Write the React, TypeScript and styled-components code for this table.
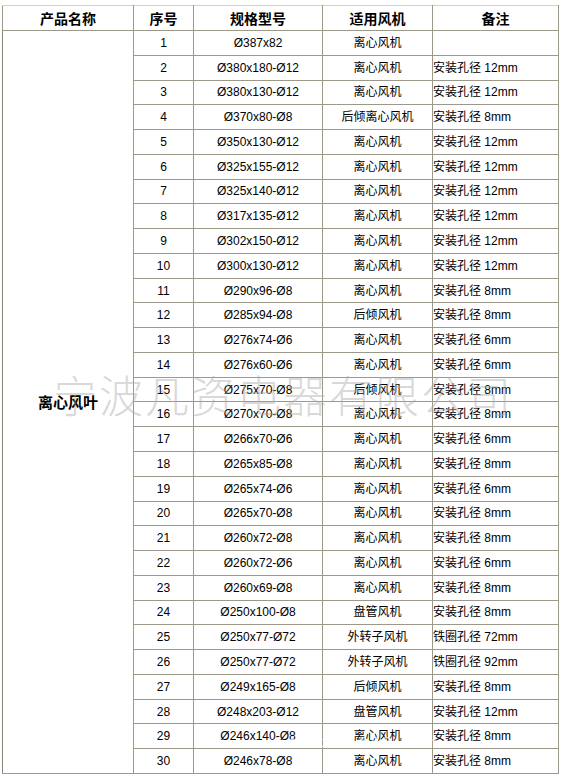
import React from 'react';
import styled, { createGlobalStyle } from 'styled-components';

const GlobalStyle = createGlobalStyle`
  html, body {
    margin: 0;
    padding: 0;
    background: #ffffff;
  }
  body {
    font-family: "Liberation Sans", "Noto Sans CJK SC", sans-serif;
    color: #000;
  }
`;

const Page = styled.div`
  position: relative;
  width: 563px;
  height: 780px;
  overflow: hidden;
  padding: 5px 0 0 2px;
  box-sizing: border-box;
`;

const Table = styled.table`
  border-collapse: collapse;
  table-layout: fixed;
  width: 556px;
  border-top: 1px solid #d2cfc3;
  border-left: 1px solid #8a8675;
  border-right: 1px solid #8a8675;
  border-bottom: 1px solid #7e7a68;
`;

const HeadCell = styled.th`
  height: 24px;
  padding: 0;
  border: 1px solid #9d998a;
  border-top-color: #d2cfc3;
  font-family: "Noto Sans CJK SC", sans-serif;
  font-size: 14px;
  font-weight: 700;
  text-align: center;
  vertical-align: middle;
  line-height: 1;
`;

const Cell = styled.td<{ $align?: 'left' | 'center' }>`
  height: 23.77px;
  padding: 0;
  border: 1px solid #9d998a;
  font-size: 12px;
  line-height: 1;
  text-align: ${(p) => p.$align ?? 'center'};
  vertical-align: middle;
  white-space: nowrap;
  overflow: hidden;
`;

const NameCell = styled.td`
  padding: 0;
  border: 1px solid #9d998a;
  border-left: none;
  font-family: "Noto Sans CJK SC", sans-serif;
  font-size: 15px;
  font-weight: 700;
  text-align: center;
  vertical-align: middle;
`;

const Watermark = styled.div`
  position: absolute;
  left: 53px;
  top: 372px;
  font-family: "Noto Sans CJK SC", sans-serif;
  font-weight: 300;
  font-size: 44px;
  letter-spacing: 2px;
  line-height: 1;
  color: rgba(170, 170, 170, 0.45);
  white-space: nowrap;
  pointer-events: none;
`;

const FaintMark = styled.div`
  position: absolute;
  left: 290px;
  top: 734px;
  font-family: "Liberation Sans", sans-serif;
  font-size: 14px;
  letter-spacing: 4px;
  color: rgba(255, 255, 255, 0.75);
  white-space: nowrap;
  pointer-events: none;
`;

type Row = [string, string, string];

const rows: Row[] = [
  ['Ø387x82', '离心风机', ''],
  ['Ø380x180-Ø12', '离心风机', '安装孔径 12mm'],
  ['Ø380x130-Ø12', '离心风机', '安装孔径 12mm'],
  ['Ø370x80-Ø8', '后倾离心风机', '安装孔径 8mm'],
  ['Ø350x130-Ø12', '离心风机', '安装孔径 12mm'],
  ['Ø325x155-Ø12', '离心风机', '安装孔径 12mm'],
  ['Ø325x140-Ø12', '离心风机', '安装孔径 12mm'],
  ['Ø317x135-Ø12', '离心风机', '安装孔径 12mm'],
  ['Ø302x150-Ø12', '离心风机', '安装孔径 12mm'],
  ['Ø300x130-Ø12', '离心风机', '安装孔径 12mm'],
  ['Ø290x96-Ø8', '离心风机', '安装孔径 8mm'],
  ['Ø285x94-Ø8', '后倾风机', '安装孔径 8mm'],
  ['Ø276x74-Ø6', '离心风机', '安装孔径 6mm'],
  ['Ø276x60-Ø6', '离心风机', '安装孔径 6mm'],
  ['Ø275x70-Ø8', '后倾风机', '安装孔径 8mm'],
  ['Ø270x70-Ø8', '离心风机', '安装孔径 8mm'],
  ['Ø266x70-Ø6', '离心风机', '安装孔径 6mm'],
  ['Ø265x85-Ø8', '离心风机', '安装孔径 8mm'],
  ['Ø265x74-Ø6', '离心风机', '安装孔径 6mm'],
  ['Ø265x70-Ø8', '离心风机', '安装孔径 8mm'],
  ['Ø260x72-Ø8', '离心风机', '安装孔径 8mm'],
  ['Ø260x72-Ø6', '离心风机', '安装孔径 6mm'],
  ['Ø260x69-Ø8', '离心风机', '安装孔径 8mm'],
  ['Ø250x100-Ø8', '盘管风机', '安装孔径 8mm'],
  ['Ø250x77-Ø72', '外转子风机', '铁圈孔径 72mm'],
  ['Ø250x77-Ø72', '外转子风机', '铁圈孔径 92mm'],
  ['Ø249x165-Ø8', '后倾风机', '安装孔径 8mm'],
  ['Ø248x203-Ø12', '盘管风机', '安装孔径 12mm'],
  ['Ø246x140-Ø8', '离心风机', '安装孔径 8mm'],
  ['Ø246x78-Ø8', '离心风机', '安装孔径 8mm'],
];

export default function App() {
  return (
    <Page>
      <GlobalStyle />
      <Table>
        <colgroup>
          <col style={{ width: 131 }} />
          <col style={{ width: 60 }} />
          <col style={{ width: 129 }} />
          <col style={{ width: 110 }} />
          <col style={{ width: 126 }} />
        </colgroup>
        <thead>
          <tr>
            <HeadCell>产品名称</HeadCell>
            <HeadCell>序号</HeadCell>
            <HeadCell>规格型号</HeadCell>
            <HeadCell>适用风机</HeadCell>
            <HeadCell>备注</HeadCell>
          </tr>
        </thead>
        <tbody>
          {rows.map(([spec, fan, note], i) => (
            <tr key={i}>
              {i === 0 && <NameCell rowSpan={rows.length}>离心风叶</NameCell>}
              <Cell>{i + 1}</Cell>
              <Cell>{spec}</Cell>
              <Cell>{fan}</Cell>
              <Cell $align="left">{note}</Cell>
            </tr>
          ))}
        </tbody>
      </Table>
      <Watermark>宁波凡资电器有限公司</Watermark>
      <FaintMark>fanzi.1688.com</FaintMark>
    </Page>
  );
}
